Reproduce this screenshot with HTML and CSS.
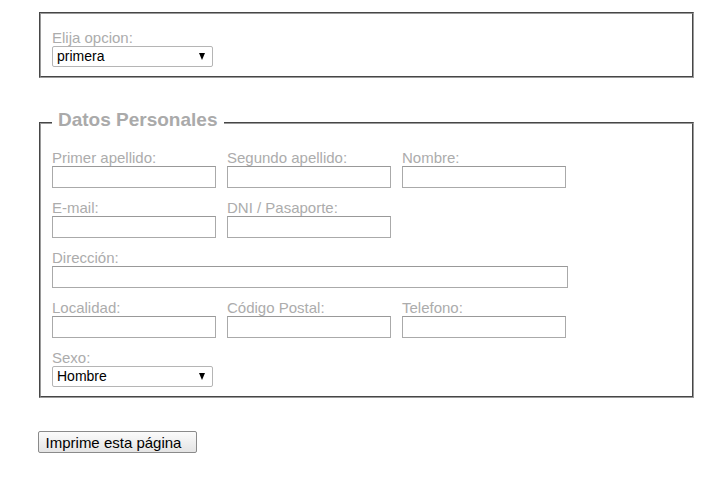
FILE: index.html
```html
<!DOCTYPE html>
<html lang="es">
<head>
<meta charset="utf-8">
<title>Formulario</title>
<link rel="stylesheet" href="styles.css">
</head>
<body>
<div class="page">
  <fieldset class="box box-top">
    <label class="lbl" for="opcion">Elija opcion:</label>
    <span class="sel-wrap">
      <select id="opcion" class="sel"><option>primera</option><option>segunda</option></select>
    </span>
  </fieldset>

  <fieldset class="box box-personal">
    <legend class="legend">Datos Personales</legend>
    <div class="grid">
      <div class="field"><label class="lbl">Primer apellido:</label><input class="inp" type="text"></div>
      <div class="field"><label class="lbl">Segundo apellido:</label><input class="inp" type="text"></div>
      <div class="field"><label class="lbl">Nombre:</label><input class="inp" type="text"></div>

      <div class="field"><label class="lbl">E-mail:</label><input class="inp" type="text"></div>
      <div class="field span2"><label class="lbl">DNI / Pasaporte:</label><input class="inp" type="text"></div>

      <div class="field span3"><label class="lbl">Dirección:</label><input class="inp inp-wide" type="text"></div>

      <div class="field"><label class="lbl">Localidad:</label><input class="inp" type="text"></div>
      <div class="field"><label class="lbl">Código Postal:</label><input class="inp" type="text"></div>
      <div class="field"><label class="lbl">Telefono:</label><input class="inp" type="text"></div>

      <div class="field span3">
        <label class="lbl">Sexo:</label>
        <span class="sel-wrap">
          <select class="sel"><option>Hombre</option><option>Mujer</option></select>
        </span>
      </div>
    </div>
  </fieldset>

  <button class="btn" type="button">Imprime esta página</button>
</div>
</body>
</html>
```

FILE: styles.css
```css
html, body {
  margin: 0;
  padding: 0;
  background: #ffffff;
}

body {
  font-family: "Liberation Sans", Arial, sans-serif;
  color: #000;
}

.page {
  padding: 12px 0 0 39px;
  width: 655px;
}

.box {
  margin: 0;
  min-width: 0;
  border: 2px groove #9a9a9a;
  box-sizing: border-box;
  width: 655px;
}

.box-top {
  padding: 16px 11px 9px 11px;
}

.box-personal {
  margin-top: 31px;
  padding: 13px 11px 9px 11px;
}

.legend {
  font-size: 19px;
  font-weight: bold;
  color: #aaaaaa;
  line-height: 22px;
  padding: 0 7px 6px 6px;
}

.lbl {
  display: block;
  font-size: 15px;
  line-height: 16px;
  color: #acacac;
}

.grid {
  display: grid;
  grid-template-columns: 164px 164px 164px;
  column-gap: 11px;
  row-gap: 12px;
}

.span2 { grid-column: span 2; }
.span3 { grid-column: span 3; }

.inp {
  display: block;
  box-sizing: border-box;
  width: 164px;
  height: 22px;
  margin: 0;
  padding: 0 3px;
  border: 1px solid #aaaaaa;
  border-top-color: #999999;
  background: #fff;
  font-family: "Liberation Sans", Arial, sans-serif;
  font-size: 14px;
  outline: none;
}

.inp-wide {
  width: 516px;
}

.sel-wrap {
  position: relative;
  display: block;
  width: 161px;
  height: 21px;
}

.sel-wrap::after {
  content: "";
  position: absolute;
  right: 8px;
  top: 7px;
  width: 0;
  height: 0;
  border-left: 3.5px solid transparent;
  border-right: 3.5px solid transparent;
  border-top: 7px solid #000;
  pointer-events: none;
}

.sel {
  -webkit-appearance: none;
  appearance: none;
  display: block;
  box-sizing: border-box;
  width: 161px;
  height: 21px;
  margin: 0;
  padding: 0 16px 0 4px;
  border: 1px solid #b5b5b5;
  border-radius: 2px;
  background: #fff;
  color: #000;
  font-family: "Liberation Sans", Arial, sans-serif;
  font-size: 14px;
  line-height: 19px;
  outline: none;
}

.btn {
  display: block;
  margin: 33px 0 0 -1px;
  box-sizing: border-box;
  width: 159px;
  height: 22px;
  padding: 0 8px 0 0;
  border: 1px solid #8a8a8a;
  border-radius: 2px;
  background: linear-gradient(#fbfbfb, #e4e4e4);
  color: #000;
  font-family: "Liberation Sans", Arial, sans-serif;
  font-size: 15px;
}
```
